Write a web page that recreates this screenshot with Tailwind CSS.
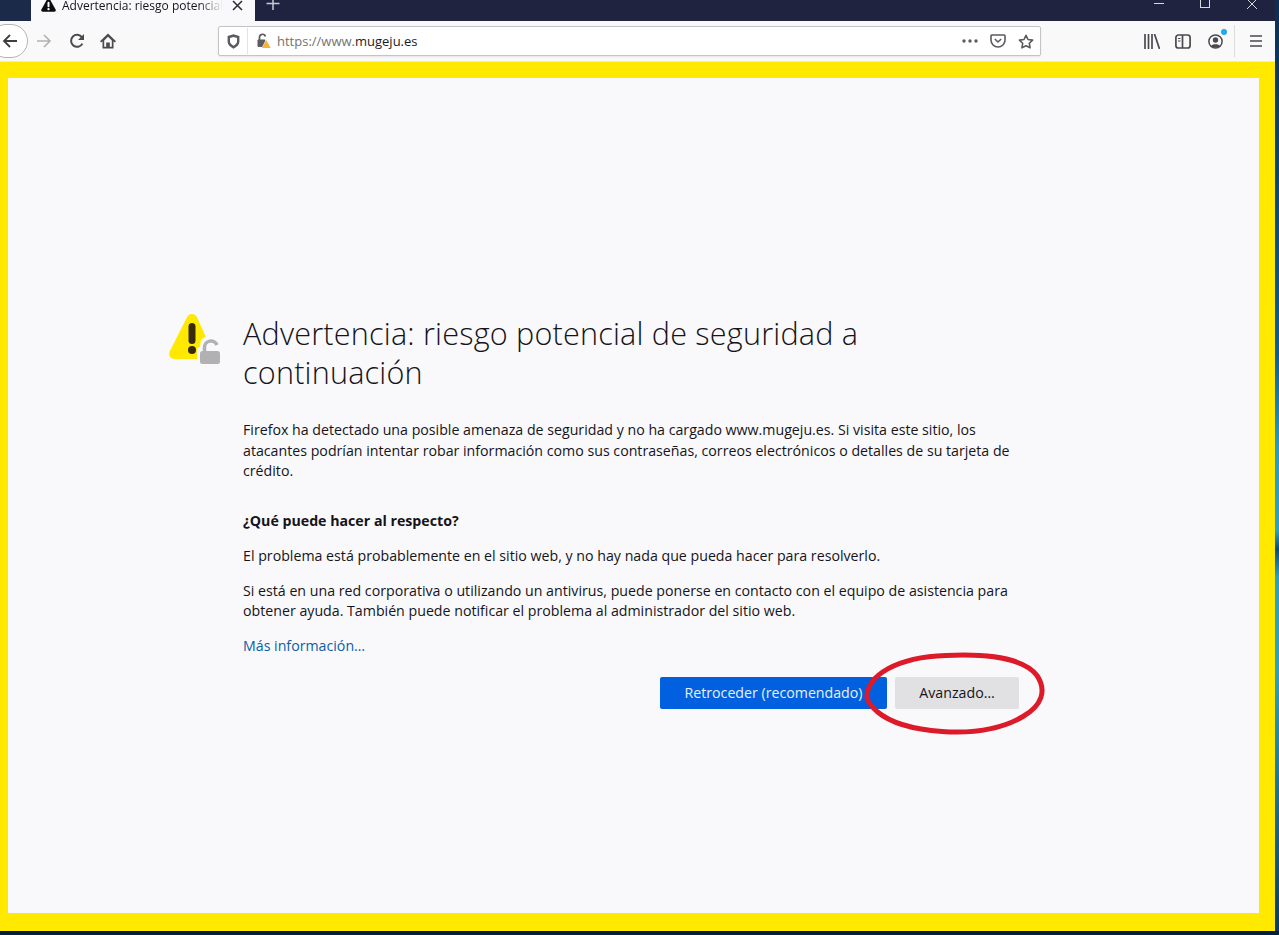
<!DOCTYPE html>
<html lang="es">
<head>
<meta charset="utf-8">
<title>Advertencia</title>
<script src="https://cdn.jsdelivr.net/npm/@tailwindcss/browser@4"></script>
</head>
<body class="m-0 overflow-hidden bg-[#04203c] font-['Open_Sans','Noto_Sans',sans-serif]">
<div class="relative flex h-[935px] w-[1279px] flex-col">
  <div class="flex min-h-0 flex-1">
    <div class="flex w-[1275px] flex-col">
      <!-- title bar -->
      <div class="flex h-[21px] items-stretch bg-[#1f2340]">
        <div class="w-[31px] bg-[#1c2a4a]"></div>
        <div class="flex w-[224px] items-center overflow-hidden bg-[#f9f9fb] pl-[10px]">
          <svg class="mt-[-11px] h-[14px] w-[15px] shrink-0" viewBox="0 0 15 14"><path d="M7.500 .5c-.7 0-1.100.3-1.400.8L.4 11.500C-.2 12.600.5 13.700 1.800 13.700h11.400c1.300 0 2-1.100 1.400-2.200L8.900 1.300C8.600 .8 8.200 .5 7.500 .5z" fill="#0c0c0d"/><rect x="6.500" y="3.800" width="2" height="5.400" rx="1" fill="#fff"/><circle cx="7.500" cy="11.100" r="1.200" fill="#fff"/></svg>
          <div class="mt-[-9px] ml-[6px] w-[161px] overflow-hidden whitespace-nowrap text-[12px] leading-[14px] text-[#15141a] [mask-image:linear-gradient(to_right,black_85%,transparent)]">Advertencia: riesgo potencial de seguridad</div>
          <svg class="mt-[-11px] ml-[9px] h-[11px] w-[11px] shrink-0" viewBox="0 0 11 11"><path d="M1 1l9 9M10 1l-9 9" stroke="#2b2a33" stroke-width="1.500" fill="none"/></svg>
        </div>
        <div class="flex w-[35px] justify-center">
          <svg class="mt-[-3px] h-[14px] w-[14px]" viewBox="0 0 14 14"><path d="M7 0v13M.5 6.500h13" stroke="#c9cbd4" stroke-width="1.500" fill="none"/></svg>
        </div>
        <div class="flex-1"></div>
        <div class="flex items-start">
          <div class="mt-[3px] mr-[36px] h-px w-[10px] bg-[#d8dae2]"></div>
          <div class="mt-[-4px] mr-[37px] h-[12px] w-[10px] border border-[#d8dae2]"></div>
          <svg class="mt-[-1px] mr-[18px] h-[10px] w-[10px]" viewBox="0 0 10 10"><path d="M0 0l10 10M10 0L0 10" stroke="#d8dae2" stroke-width="1" fill="none"/></svg>
        </div>
      </div>
      <!-- toolbar -->
      <div class="relative flex h-[40px] items-center bg-[#f9f9fa] text-[#4a4a4f]">
        <div class="ml-[-11px] flex h-[34px] w-[39px] shrink-0 items-center justify-end rounded-full border border-[#b5b5b8] bg-white pr-[9px]">
          <svg class="h-[16px] w-[16px]" viewBox="0 0 16 16"><path d="M15 8H2M8 2L2 8l6 6" stroke="#3e3e42" stroke-width="1.800" fill="none"/></svg>
        </div>
        <svg class="ml-[8px] h-[16px] w-[16px] shrink-0" viewBox="0 0 16 16"><path d="M1 8h13M8 2l6 6-6 6" stroke="#b1b1b4" stroke-width="1.600" fill="none"/></svg>
        <svg class="ml-[17px] h-[16px] w-[16px] shrink-0" viewBox="0 0 16 16"><path d="M13.400 10.600A6 6 0 1 1 13 4.400" stroke="#4a4a4f" stroke-width="2" fill="none"/><path d="M15 1v6H9z" fill="#4a4a4f"/></svg>
        <svg class="ml-[15px] h-[16px] w-[16px] shrink-0" viewBox="0 0 16 16"><path d="M8 .6L0 8.200l1.200 1.300 1.300-1.200v7.100h11V8.300l1.300 1.200L16 8.200z" fill="#4a4a4f"/><path d="M8 3.800l3.800 3.600v6.300H9.800V9.500H6.200v4.200H4.200V7.400z" fill="#f9f9fa"/></svg>
        <div class="ml-[102px] flex h-[30px] w-[823px] shrink-0 items-center rounded-[2px] border border-[#c4c4c6] bg-white pr-[6px] shadow-[0_1px_2px_rgba(0,0,0,0.08)]">
          <svg class="ml-[8px] h-[15px] w-[13px] shrink-0" viewBox="0 0 13 15"><path d="M6.500 .3L.6 1.900v5.400c0 3.600 2.600 5.900 5.900 7.400 3.300-1.500 5.900-3.800 5.900-7.400V1.900z" fill="#5b5b60"/><path d="M6.500 3L3 3.900V7.300c0 2 1.400 3.300 3.500 4.400 2.100-1.100 3.500-2.400 3.500-4.400V3.900z" fill="#fff"/></svg>
          <div class="ml-[7px] h-[26px] w-px bg-[#e3e3e5]"></div>
          <svg class="ml-[8px] h-[16px] w-[15px] shrink-0" viewBox="0 0 15 16"><path d="M3.500 7V4.300a3 3 0 0 1 5.900-.8" stroke="#5b5b60" stroke-width="1.700" fill="none"/><rect x="1.500" y="6.500" width="8" height="7.500" rx="1" fill="#5b5b60"/><path d="M10.200 6L15.200 15.500H5.400z" fill="#f9f9fa"/><path d="M10.300 7L14.600 15H6z" fill="#f5b33b"/></svg>
          <div class="ml-[6px] whitespace-nowrap text-[13px] leading-[16px] text-[#737373]">https://www.<span class="text-[#1c1c20]">mugeju.es</span></div>
          <div class="flex-1"></div>
          <svg class="h-[4px] w-[16px]" viewBox="0 0 16 4"><circle cx="2" cy="2" r="1.700" fill="#5b5b60"/><circle cx="8" cy="2" r="1.700" fill="#5b5b60"/><circle cx="14" cy="2" r="1.700" fill="#5b5b60"/></svg>
          <svg class="ml-[12px] h-[14px] w-[16px]" viewBox="0 0 16 14"><path d="M1.800 1h12.400c.5 0 .8.300.8.800V6A7 7 0 0 1 1 6V1.800c0-.5.300-.8.800-.8z" stroke="#5b5b60" stroke-width="1.600" fill="none"/><path d="M4.800 5L8 8l3.200-3" stroke="#5b5b60" stroke-width="1.600" fill="none"/></svg>
          <svg class="ml-[12px] h-[15px] w-[16px]" viewBox="0 0 16 15"><path d="M8 1.300l2 4.200 4.600.6-3.300 3.200.8 4.500L8 11.700l-4.100 2.100.8-4.500L1.400 6.100 6 5.500z" stroke="#5b5b60" stroke-width="1.600" fill="none" stroke-linejoin="round"/></svg>
        </div>
        <svg class="ml-[103px] h-[15px] w-[16px] shrink-0" viewBox="0 0 16 15"><path d="M1 0v15M4.500 0v15M8 0v15M10.500 0l5 15" stroke="#4a4a4f" stroke-width="1.700" fill="none"/></svg>
        <svg class="ml-[15px] h-[15px] w-[16px] shrink-0" viewBox="0 0 16 15"><rect x=".9" y="1" width="14.200" height="13" rx="2.500" stroke="#4a4a4f" stroke-width="1.700" fill="none"/><path d="M7.500 1v13" stroke="#4a4a4f" stroke-width="1.700"/><path d="M3 4.500h2.500M3 7h2.500" stroke="#4a4a4f" stroke-width="1.100"/></svg>
        <div class="relative ml-[17px] h-[15px] w-[15px] shrink-0">
          <svg class="h-[15px] w-[15px]" viewBox="0 0 15 15"><circle cx="7.500" cy="7.500" r="6.600" stroke="#4a4a4f" stroke-width="1.500" fill="none"/><circle cx="7.500" cy="6" r="2.700" fill="#4a4a4f"/><path d="M3 12c1-2.500 8-2.500 9 0-2 2-7 2-9 0z" fill="#4a4a4f"/></svg>
          <div class="absolute top-[-5px] right-[-4px] h-[6px] w-[6px] rounded-full bg-[#22a7f0]"></div>
        </div>
        <div class="ml-[11px] h-[32px] w-px bg-[#dcdcde]"></div>
        <svg class="ml-[15px] h-[12px] w-[12px] shrink-0" viewBox="0 0 12 12"><path d="M0 1h12M0 6h12M0 11h12" stroke="#4a4a4f" stroke-width="1.600"/></svg>
      </div>
      <!-- yellow frame -->
      <div class="min-h-0 flex-1 border-t border-[#f2ead0] bg-[#ffe900] pt-[16px] pr-[16px] pb-[17px] pl-[8px]">
        <div class="h-[835px] bg-[#f9f9fb] pt-[236px] pl-[160px] text-[#15141a]">
          <div class="flex">
            <div class="relative h-[52px] w-[75px] shrink-0">
              <svg class="h-[52px] w-[52px]" viewBox="0 0 52 52">
                <path d="M24 0c-2.500 0-4 1.400-5 3.300L1.900 37C.1 40.700 2.200 45 6.500 45H32L42 32 29 3.300C28 1.400 26.500 0 24 0z" fill="#ffe900"/>
                <rect x="20.500" y="9" width="7" height="21" rx="3.500" fill="#3a2a0c"/>
                <circle cx="24" cy="36" r="4" fill="#3a2a0c"/>
                <path d="M29 52V36a3 3 0 0 1 3-3l1-7a10 10 0 0 1 16 1l4 6v19z" fill="#f9f9fb"/>
                <path d="M36.500 38v-4.500a6.500 6.500 0 0 1 12.500-2.500" stroke="#b1b1b3" stroke-width="3.500" fill="none"/>
                <rect x="32" y="37" width="20" height="13" rx="2.500" fill="#b1b1b3"/>
              </svg>
            </div>
            <div class="w-[776px]">
              <h1 class="w-[640px] text-[30.600px] leading-[39px] font-light tracking-[0.2px]">Advertencia: riesgo potencial de seguridad a continuación</h1>
              <p class="mt-[28px] w-[775px] text-[14.200px] leading-[20.500px]">Firefox ha detectado una posible amenaza de seguridad y no ha cargado www.mugeju.es. Si visita este sitio, los atacantes podrían intentar robar información como sus contraseñas, correos electrónicos o detalles de su tarjeta de crédito.</p>
              <p class="mt-[29px] text-[14.200px] leading-[20px] font-bold">¿Qué puede hacer al respecto?</p>
              <p class="mt-[15px] text-[14.200px] leading-[20px]">El problema está probablemente en el sitio web, y no hay nada que pueda hacer para resolverlo.</p>
              <p class="mt-[15px] text-[14.200px] leading-[20px]">Si está en una red corporativa o utilizando un antivirus, puede ponerse en contacto con el equipo de asistencia para obtener ayuda. También puede notificar el problema al administrador del sitio web.</p>
              <a class="mt-[15px] block text-[14.200px] leading-[20px] text-[#0a5ea8]">Más información…</a>
              <div class="mt-[21px] flex justify-end gap-[8px]">
                <button class="h-[32px] w-[227px] rounded-[2px] bg-[#0060df] text-[14.200px] text-[#e8f0fb]">Retroceder (recomendado)</button>
                <button class="h-[32px] w-[124px] rounded-[2px] bg-[#e1e1e3] text-[14.200px] text-[#15141a]">Avanzado…</button>
              </div>
            </div>
          </div>
        </div>
      </div>
    </div>
    <!-- desktop strip -->
    <div class="h-full w-[4px] bg-[linear-gradient(to_bottom,#0c2f52_0%,#0d5c92_38%,#2a9ac4_48%,#2e9fc4_57%,#0a4a7c_59%,#2e9fc4_62%,#30a0c0_72%,#0a3a60_100%)]"></div>
  </div>
  <div class="h-[4px] bg-[#04203c]"></div>
  <!-- hand-drawn annotation over the page -->
  <svg class="pointer-events-none absolute top-[650px] left-[864px] h-[88px] w-[182px]" viewBox="0 0 182 88">
    <path d="M3 47C3 26 32 7 82 5.500c42-2 78 3 91 20 10 15 5 30-14 41-22 13-52 17-81 15-28-2-52-9-65-20C7 56 3 51 3 47z" stroke="#dd1a2a" stroke-width="5" fill="none"/>
  </svg>
</div>
</body>
</html>
